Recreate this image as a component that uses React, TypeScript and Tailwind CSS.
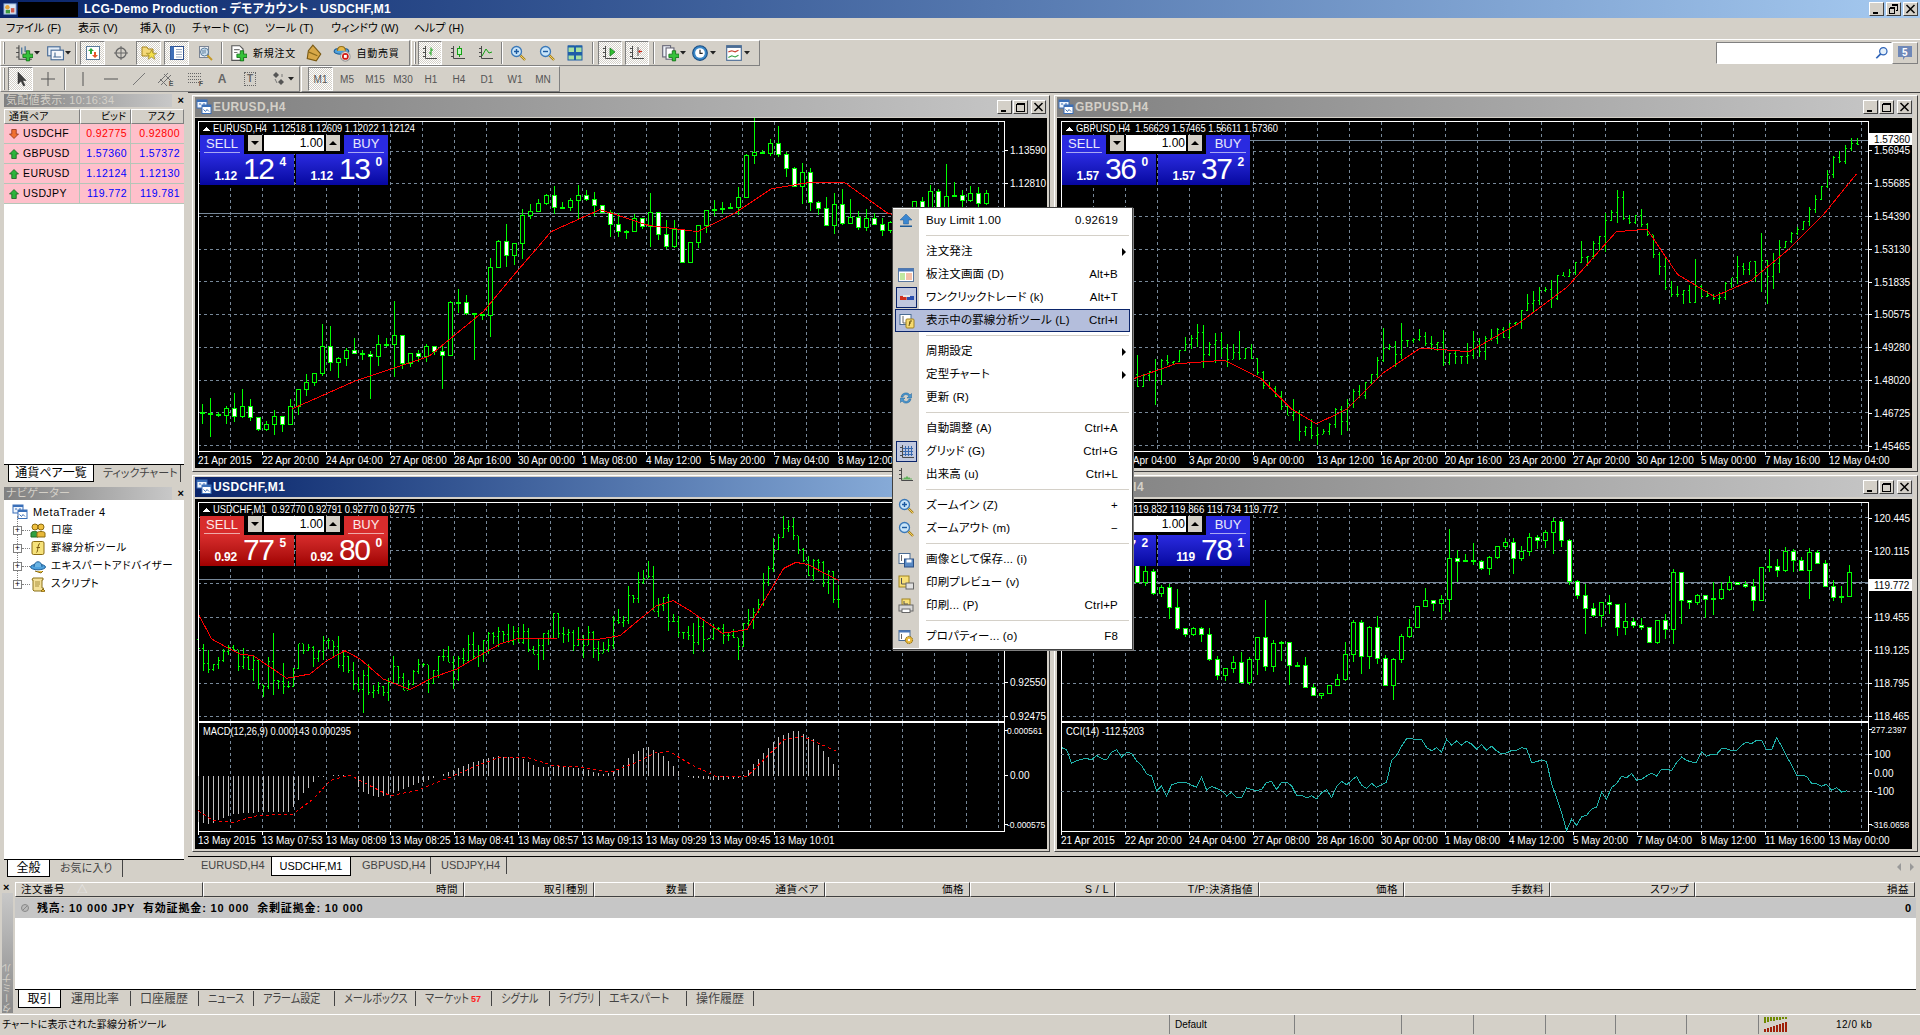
import React from 'react';

type Pt = [number, number];

// ─── helpers: trace coordinates come from the 1568 wide preview, or the 3x crop of the USDCHF window ───
const sp = (p: Pt[]): Pt[] => p.map(([x, y]) => [x * 1.2245, y * 1.2245]);
const z9 = (p: Pt[]): Pt[] => p.map(([x, y]) => [190 + x / 3, 470 + y / 3]);

const interp = (pts: Pt[], x: number) => {
  if (x <= pts[0][0]) return pts[0][1];
  for (let i = 1; i < pts.length; i++) {
    if (x <= pts[i][0]) {
      const t = (x - pts[i - 1][0]) / (pts[i][0] - pts[i - 1][0]);
      return pts[i - 1][1] + t * (pts[i][1] - pts[i - 1][1]);
    }
  }
  return pts[pts.length - 1][1];
};

const rng = (seed: number) => () => {
  seed = (seed + 0x6d2b79f5) | 0;
  let t = Math.imul(seed ^ (seed >>> 15), 1 | seed);
  t = (t + Math.imul(t ^ (t >>> 7), 61 | t)) ^ t;
  return ((t ^ (t >>> 14)) >>> 0) / 4294967296;
};

type Bar = { x: number; o: number; c: number; h: number; l: number };

const makeBars = (pts: Pt[], x0: number, x1: number, step: number, noise: number, wick: number, seed: number) => {
  const r = rng(seed);
  const out: Bar[] = [];
  let prev = interp(pts, x0);
  for (let x = x0; x <= x1; x += step) {
    const spike = r() < 0.16 ? 2.3 : 1;
    const c = interp(pts, x) + (r() - 0.5) * 2 * noise * spike;
    const o = prev;
    const up = r() * r() * wick * spike;
    const dn = r() * r() * wick * spike;
    out.push({ x: Math.round(x), o, c, h: Math.min(o, c) - up, l: Math.max(o, c) + dn });
    prev = c;
  }
  return out;
};

const toLine = (p: Pt[]) => p.map(([x, y]) => `${x.toFixed(1)},${y.toFixed(1)}`).join(' ');

const jitter = (pts: Pt[], step: number, amp: number, seed: number): Pt[] => {
  const r = rng(seed);
  const out: Pt[] = [];
  for (let x = pts[0][0]; x <= pts[pts.length - 1][0]; x += step) out.push([x, interp(pts, x) + (r() - 0.5) * amp]);
  return out;
};

const eurPath = sp([[163, 338], [175, 338], [190, 335], [205, 345], [232, 350], [240, 320], [268, 295], [300, 290], [330, 290], [360, 285], [365, 255], [395, 252], [405, 200], [440, 170], [470, 160], [490, 180], [520, 185], [555, 205], [570, 185], [605, 155], [610, 125], [640, 125], [650, 155], [680, 175], [725, 185], [760, 165], [805, 165]]);
const eurMa = sp([[238, 335], [290, 312], [350, 292], [395, 255], [420, 225], [450, 190], [490, 172], [530, 185], [570, 190], [600, 175], [630, 155], [660, 150], [690, 150], [725, 175], [800, 190]]);
const gbpPath = sp([[868, 300], [926, 310], [945, 300], [975, 280], [1000, 290], [1015, 285], [1030, 310], [1050, 340], [1072, 358], [1090, 340], [1110, 320], [1130, 290], [1160, 275], [1190, 295], [1230, 270], [1260, 240], [1290, 215], [1320, 172], [1340, 185], [1360, 235], [1385, 245], [1400, 240], [1420, 215], [1440, 225], [1465, 190], [1490, 150], [1500, 125], [1520, 120]]);
const gbpMa = sp([[868, 305], [926, 310], [960, 298], [1000, 295], [1030, 310], [1055, 335], [1075, 347], [1100, 335], [1130, 305], [1160, 285], [1200, 288], [1240, 265], [1280, 235], [1320, 190], [1345, 188], [1370, 225], [1400, 243], [1430, 230], [1460, 205], [1490, 175], [1516, 143]]);
const chfPath = [
  ...z9([[25, 510], [50, 590], [80, 560], [110, 555], [150, 570], [190, 575], [210, 680], [240, 630], [280, 680], [300, 620], [320, 520], [360, 550], [400, 510], [430, 550], [470, 580], [510, 680], [540, 700], [570, 670], [590, 625], [650, 660], [680, 610], [720, 620], [740, 580], [790, 580], [830, 540], [880, 530], [900, 490], [950, 505], [1000, 500], [1030, 550], [1070, 500], [1130, 485], [1165, 540], [1190, 495], [1230, 540], [1260, 495], [1300, 440], [1320, 375], [1370, 330], [1395, 420], [1420, 440], [1450, 450], [1470, 510], [1500, 505]]),
  ...sp([[580, 518], [605, 518], [620, 490], [630, 460], [640, 425], [650, 440], [660, 465], [675, 470], [685, 475]]),
];
const chfMa = [
  ...z9([[25, 435], [65, 510], [110, 535], [150, 555], [190, 560], [290, 628], [360, 615], [410, 575], [465, 545], [510, 570], [580, 630], [660, 662], [730, 625], [800, 600], [860, 565], [930, 525], [985, 508], [1100, 510], [1160, 510], [1230, 510], [1290, 500], [1350, 450], [1400, 410], [1450, 395], [1500, 425]]),
  ...sp([[590, 518], [610, 515], [625, 490], [640, 465], [650, 460], [660, 462], [685, 475]]),
];
const macdHist = [
  ...z9([[25, 1060], [60, 1065], [130, 1035], [200, 1030], [300, 1030], [330, 985], [360, 950], [385, 925], [440, 918], [490, 920], [510, 965], [560, 985], [600, 975], [680, 945], [720, 930], [760, 915], [800, 900], [850, 880], [920, 860], [1000, 870], [1040, 895], [1080, 895], [1120, 890], [1200, 905], [1240, 915], [1290, 900], [1320, 860], [1370, 830], [1420, 860], [1460, 900], [1480, 920], [1500, 925]]),
  ...sp([[585, 638], [605, 636], [620, 620], [635, 603], [650, 597], [665, 605], [685, 630]]),
];
const macdSig = [
  ...z9([[25, 1025], [70, 1055], [130, 1060], [200, 1040], [310, 1035], [370, 990], [420, 935], [480, 918], [540, 950], [600, 980], [680, 965], [780, 925], [860, 890], [930, 865], [1010, 865], [1090, 890], [1180, 895], [1260, 910], [1340, 880], [1400, 850], [1440, 848], [1500, 885]]),
  ...sp([[585, 635], [610, 635], [640, 605], [655, 602], [685, 615]]),
];
const jpyPath = sp([[868, 470], [926, 470], [950, 495], [975, 520], [990, 550], [1010, 555], [1030, 520], [1060, 555], [1085, 560], [1105, 520], [1135, 560], [1150, 510], [1180, 480], [1200, 460], [1230, 450], [1265, 430], [1285, 480], [1310, 500], [1330, 510], [1350, 525], [1375, 480], [1410, 490], [1440, 475], [1470, 455], [1500, 480], [1510, 480]]);
const cciPath = sp([[867, 617], [890, 622], [920, 615], [950, 647], [980, 640], [1020, 650], [1050, 640], [1075, 655], [1100, 640], [1130, 640], [1150, 597], [1175, 612], [1200, 605], [1230, 615], [1260, 620], [1280, 675], [1300, 660], [1320, 640], [1350, 630], [1380, 620], [1430, 612], [1450, 607], [1470, 635], [1490, 640], [1510, 650]]);

type ChartCfg = {
  ox: number; oy: number; w: number; h: number; fr: number; mb: number;
  gridY: number; gridStep: number; head: string;
  labels: [string, number][]; dates: string[];
  priceLine: number; priceBox?: [string, number];
  bars: Bar[]; candle: boolean; ma?: Pt[];
  indTop?: number; indText?: string; indLen?: number; indLabels?: [string, number][];
  hist?: { base: number; pts: Pt[]; sig: Pt[] }; cci?: Pt[]; levels?: number[];
};

const ChartSvg: React.FC<{ c: ChartCfg }> = ({ c }) => {
  const fl = c.ox + (c.ox < 1000 ? 3 : 4);
  const axisBottom = c.indTop ? 832 : c.mb;
  const xs: number[] = [];
  for (let x = fl + 32; x < c.fr; x += 32) xs.push(x);
  const ys: number[] = [];
  for (let y = c.gridY; y < c.mb - 1; y += c.gridStep) ys.push(Math.round(y));
  return (
    <svg width={c.w} height={c.h} viewBox={`${c.ox} ${c.oy} ${c.w} ${c.h}`} shapeRendering="crispEdges" className="block">
      {xs.map((x) => (
        <g key={x}>
          <line x1={x + 0.5} x2={x + 0.5} y1={c.oy + 4} y2={c.mb} stroke="#778899" strokeDasharray="3 3" />
          {c.indTop && <line x1={x + 0.5} x2={x + 0.5} y1={c.indTop + 1} y2={axisBottom} stroke="#778899" strokeDasharray="3 3" />}
        </g>
      ))}
      {ys.map((y) => (
        <line key={y} x1={fl} x2={c.fr} y1={y + 0.5} y2={y + 0.5} stroke="#778899" strokeDasharray="3 3" />
      ))}
      <line x1={fl} x2={c.fr} y1={c.priceLine + 0.5} y2={c.priceLine + 0.5} stroke="#778899" />
      {c.bars.map((b) =>
        c.candle ? (
          <g key={b.x}>
            <line x1={b.x + 0.5} x2={b.x + 0.5} y1={b.h} y2={b.l} stroke="#00ff00" />
            <rect x={b.x - 1.5} y={Math.min(b.o, b.c)} width={4} height={Math.max(1, Math.abs(b.o - b.c))} fill={b.c > b.o ? '#ffffff' : '#000000'} stroke="#00ff00" />
          </g>
        ) : (
          <g key={b.x} stroke="#00ff00">
            <line x1={b.x + 0.5} x2={b.x + 0.5} y1={b.h} y2={b.l} />
            <line x1={b.x - 1} x2={b.x} y1={b.o} y2={b.o} />
            <line x1={b.x + 1} x2={b.x + 2} y1={b.c} y2={b.c} />
          </g>
        ),
      )}
      {c.ma && <polyline points={toLine(c.ma)} fill="none" stroke="#ff0000" />}
      <rect x={fl + 0.5} y={c.oy + 3.5} width={c.fr - fl} height={c.mb - c.oy - 3.5} fill="none" stroke="#ffffff" />
      {c.indTop && <rect x={fl + 0.5} y={c.indTop + 0.5} width={c.fr - fl} height={axisBottom - c.indTop} fill="none" stroke="#ffffff" />}
      {c.hist && jitter(c.hist.pts, 5, 0, 1).map(([x, y]) => (
        <line key={x} x1={Math.round(x) + 0.5} x2={Math.round(x) + 0.5} y1={c.hist!.base} y2={y} stroke="#c0c0c0" />
      ))}
      {c.hist && <polyline points={toLine(c.hist.sig)} fill="none" stroke="#ff0000" strokeDasharray="3 3" />}
      {c.levels?.map((y) => <line key={y} x1={fl} x2={c.fr} y1={y + 0.5} y2={y + 0.5} stroke="#778899" strokeDasharray="3 3" />)}
      {c.cci && <polyline points={toLine(c.cci)} fill="none" stroke="#20b2aa" />}

      {c.dates.map((d, i) => (
        <g key={d}>
          <line x1={fl + 64 * i + 0.5} x2={fl + 64 * i + 0.5} y1={axisBottom} y2={axisBottom + 4} stroke="#ffffff" />
          <text x={fl + 64 * i} y={axisBottom + 13} fontSize={10} fill="#ffffff">{d}</text>
        </g>
      ))}
      {[...c.labels, ...(c.indLabels ?? [])].map(([t, y]) => (
        <g key={t}>
          <line x1={c.fr} x2={c.fr + 4} y1={y + 0.5} y2={y + 0.5} stroke="#ffffff" />
          <text x={t.length > 7 ? c.fr + 3 : c.fr + 6} y={y + 4} fontSize={t.length > 7 ? 8.5 : 10} fill="#ffffff">{t}</text>
        </g>
      ))}
      {c.priceBox && (
        <g>
          <rect x={c.fr + 1} y={c.priceBox[1] - 6} width={43} height={12} fill="#ffffff" />
          <text x={c.fr + 6} y={c.priceBox[1] + 4} fontSize={10} fill="#000000">{c.priceBox[0]}</text>
        </g>
      )}
      <polygon points={`${fl + 5},${c.oy + 13} ${fl + 12},${c.oy + 13} ${fl + 8.5},${c.oy + 9}`} fill="#ffffff" />
      <text x={fl + 15} y={c.oy + 14} fontSize={10.5} fill="#ffffff" xmlSpace="preserve" textLength={202} lengthAdjust="spacingAndGlyphs">{c.head}</text>
      {c.indText && <text x={fl + 5} y={c.indTop! + 13} fontSize={10.5} fill="#ffffff" textLength={c.indLen} lengthAdjust="spacingAndGlyphs">{c.indText}</text>}
    </svg>
  );
};

const eur: ChartCfg = {
  ox: 195, oy: 119, w: 852, h: 350, fr: 1004, mb: 452, gridY: 151.7, gridStep: 32.7,
  head: 'EURUSD,H4  1.12518 1.12609 1.12022 1.12124',
  labels: [['1.13590', 151], ['1.12810', 184]],
  dates: ['21 Apr 2015', '22 Apr 20:00', '24 Apr 04:00', '27 Apr 08:00', '28 Apr 16:00', '30 Apr 00:00', '1 May 08:00', '4 May 12:00', '5 May 20:00', '7 May 04:00', '8 May 12:00'],
  priceLine: 214, bars: makeBars(eurPath, 202, 986, 8, 10, 24, 11), candle: true, ma: eurMa,
};
const gbp: ChartCfg = {
  ox: 1057, oy: 119, w: 855, h: 350, fr: 1868, mb: 452, gridY: 151.7, gridStep: 32.7,
  head: 'GBPUSD,H4  1.56629 1.57465 1.56611 1.57360',
  labels: [['1.56945', 151], ['1.55685', 184], ['1.54390', 217], ['1.53130', 250], ['1.51835', 283], ['1.50575', 315], ['1.49280', 348], ['1.48020', 381], ['1.46725', 414], ['1.45465', 447]],
  dates: ['31 Mar 12:00', '1 Apr 04:00', '3 Apr 20:00', '9 Apr 00:00', '13 Apr 12:00', '16 Apr 20:00', '20 Apr 16:00', '23 Apr 20:00', '27 Apr 20:00', '30 Apr 12:00', '5 May 00:00', '7 May 16:00', '12 May 04:00'],
  priceLine: 141, priceBox: ['1.57360', 140], bars: makeBars(gbpPath, 1065, 1861, 6, 6, 14, 23), candle: false, ma: gbpMa,
};
const chf: ChartCfg = {
  ox: 195, oy: 500, w: 852, h: 350, fr: 1004, mb: 722, gridY: 517.7, gridStep: 33.3,
  head: 'USDCHF,M1  0.92770 0.92791 0.92770 0.92775',
  labels: [['0.92550', 683], ['0.92475', 717]],
  dates: ['13 May 2015', '13 May 07:53', '13 May 08:09', '13 May 08:25', '13 May 08:41', '13 May 08:57', '13 May 09:13', '13 May 09:29', '13 May 09:45', '13 May 10:01'],
  priceLine: 580, bars: makeBars(chfPath, 198, 839, 5, 10, 16, 37), candle: false, ma: chfMa,
  indTop: 723, indText: 'MACD(12,26,9) 0.000143 0.000295', indLen: 148,
  indLabels: [['0.000561', 731], ['0.00', 776], ['-0.000575', 825]],
  hist: { base: 777, pts: macdHist, sig: macdSig },
};
const jpy: ChartCfg = {
  ox: 1057, oy: 500, w: 855, h: 350, fr: 1868, mb: 722, gridY: 517.7, gridStep: 33.3,
  head: 'USDJPY,H4  119.832 119.866 119.734 119.772',
  labels: [['120.445', 519], ['120.115', 552], ['119.455', 618], ['119.125', 651], ['118.795', 684], ['118.465', 717]],
  dates: ['21 Apr 2015', '22 Apr 20:00', '24 Apr 04:00', '27 Apr 08:00', '28 Apr 16:00', '30 Apr 00:00', '1 May 08:00', '4 May 12:00', '5 May 20:00', '7 May 04:00', '8 May 12:00', '11 May 16:00', '13 May 00:00'],
  priceLine: 583, priceBox: ['119.772', 586], bars: makeBars(jpyPath, 1065, 1849, 8, 16, 22, 53), candle: true,
  indTop: 723, indText: 'CCI(14) -112.5203', indLen: 78,
  indLabels: [['277.2397', 730], ['100', 755], ['0.00', 774], ['-100', 792], ['-316.0658', 825]],
  cci: jitter(cciPath, 5, 14, 7), levels: [755, 792],
};

// ─── icons ────────────────────
const axes = <path d="M3.5 1v12.5H15M1 3.5h2M1 7.5h2M1 11.5h2" stroke="#4a4a4a" fill="none" />;
const plus = <path d="M10 6h3v3h3v3h-3v3h-3v-3H7V9h3z" fill="#35c23a" stroke="#0b6a12" strokeWidth="0.7" />;
const lens = (sign: React.ReactNode) => (
  <>
    <path d="M10 10l5 5" stroke="#a87f18" strokeWidth="2.4" />
    <path d="M10 10l5 5" stroke="#f0d060" strokeWidth="1" />
    <circle cx="6.5" cy="6.5" r="5" fill="#c8e4f8" stroke="#3a78b8" strokeWidth="1.3" />
    {sign}
  </>
);
const docBase = <path d="M2.5 1.5h7l3 3v10h-10z" fill="#fff" stroke="#555" />;

const glyphs: Record<string, React.ReactNode> = {
  app: <><rect x="1" y="2" width="14" height="12" fill="#dbe7f7" stroke="#6d8fc0" /><circle cx="5" cy="6" r="2.6" fill="#e3a33b" /><rect x="3" y="9" width="5" height="4" fill="#3d9b3d" /><rect x="9" y="7" width="4" height="5" fill="#cf5a4a" /></>,
  win: <><rect x="1" y="1" width="10" height="8" fill="#eef4fc" stroke="#3a6fb8" /><rect x="1" y="1" width="10" height="2" fill="#3a6fb8" /><rect x="6" y="6" width="9" height="8.5" fill="#fff" stroke="#3a6fb8" /><rect x="6" y="6" width="9" height="2" fill="#3a6fb8" /><path d="M7.5 10.5l2 2 1.5-2 2 2" stroke="#3a6fb8" fill="none" /><path d="M3 5h2M7 5h2" stroke="#3a6fb8" /></>,
  newChart: <>{axes}<path d="M6 3v6M9 2v5" stroke="#3a6a9a" />{plus}</>,
  profiles: <><rect x="1.5" y="2.5" width="11" height="8" fill="#e4ecf6" stroke="#466a96" /><rect x="4.5" y="5.5" width="11" height="8.5" fill="#f4f7fb" stroke="#466a96" /><path d="M6.5 11.5h7M8 7.5v4" stroke="#466a96" /></>,
  mw: <><rect x="1.5" y="1.5" width="13" height="13" fill="#fff" stroke="#5a7b9c" /><path d="M6 3l3 3H7v3H5V6H3z" fill="#2aa83a" /><path d="M10 13l-3-3h2V7h2v3h2z" fill="#e4552a" /></>,
  target: <><circle cx="8" cy="8" r="5" fill="none" stroke="#666" strokeWidth="1.3" /><path d="M8 1v14M1 8h14" stroke="#666" /></>,
  folderStar: <><path d="M1 2h5l1 2h5v7H1z" fill="#f4d878" stroke="#a58420" /><path d="M10.5 5l1.5 3.3h3.6l-2.8 2.2 1.1 3.7-3.4-2.2-3.4 2.2 1.1-3.7-2.8-2.2H9z" fill="#f4e04a" stroke="#8a7418" strokeWidth="0.6" /></>,
  term: <><rect x="1.5" y="1.5" width="13" height="13" fill="#fff" stroke="#2d4f8c" /><rect x="1.5" y="1.5" width="3.5" height="13" fill="#3e6fb8" /><path d="M7 4.5h6M7 7h6M7 9.5h6M7 12h6" stroke="#98a8c0" /></>,
  tester: <><rect x="2.5" y="1.5" width="9" height="11" fill="#eef0f4" stroke="#7a8494" /><path d="M10 10l5 5" stroke="#c69a28" strokeWidth="2" /><circle cx="7.5" cy="7" r="4" fill="#cfe0ee" stroke="#587c9c" /><path d="M6 5v4M8 4.5v4" stroke="#587c9c" /></>,
  newOrder: <>{docBase}<path d="M4.5 5h5M4.5 7.5h3" stroke="#777" />{plus}</>,
  gold: <><path d="M7 1l7 8-4 6-8-2 1-7z" fill="#d8a848" stroke="#7a5a14" /><path d="M3 7l8 3.5" stroke="#8a6a1c" /></>,
  auto: <><ellipse cx="7.5" cy="6.5" rx="6.5" ry="2.6" fill="#4ea2de" stroke="#1f5f98" /><path d="M4 6c0-5 7-5 7 0" fill="#e6b848" stroke="#94701a" /><circle cx="11" cy="11" r="4.2" fill="#fff" stroke="#999" /><circle cx="11" cy="11" r="3" fill="#d01c14" /><rect x="9.7" y="9.7" width="2.6" height="2.6" fill="#fff" /></>,
  bars: <>{axes}<path d="M9 2.5v8M7 8h2M9 5h2" stroke="#14a014" /></>,
  candle: <>{axes}<path d="M9.5 1v11" stroke="#14a014" /><rect x="7.5" y="3.5" width="4" height="6" fill="#bff2bf" stroke="#14a014" /></>,
  line: <>{axes}<path d="M4 11l4-7 3 4 3-1" stroke="#14a014" fill="none" /></>,
  zoomIn: lens(<path d="M4 6.5h5M6.5 4v5" stroke="#1c5aa0" strokeWidth="1.4" />),
  zoomOut: lens(<path d="M4 6.5h5" stroke="#1c5aa0" strokeWidth="1.4" />),
  tile: <><rect x="1" y="1" width="6.5" height="6.5" fill="#a8e0a0" stroke="#1f5fa8" /><rect x="8.5" y="1" width="6.5" height="6.5" fill="#a8e0a0" stroke="#1f5fa8" /><rect x="1" y="8.5" width="6.5" height="6.5" fill="#a8e0a0" stroke="#1f5fa8" /><rect x="8.5" y="8.5" width="6.5" height="6.5" fill="#a8e0a0" stroke="#1f5fa8" /><path d="M1 1.5h6.5M8.5 1.5H15M1 9.5h6.5M8.5 9.5H15" stroke="#1f5fa8" strokeWidth="2" /></>,
  scrollOn: <>{axes}<path d="M8 3l5 4-5 4z" fill="#30c030" stroke="#0e6e18" strokeWidth="0.7" /></>,
  shiftOn: <>{axes}<path d="M9 2v9" stroke="#555" /><path d="M13 6.5H10M11.5 5l-2 1.5 2 1.5" stroke="#d02818" fill="none" /></>,
  indAdd: <><rect x="1.5" y="1.5" width="7" height="10" fill="#eef2f8" stroke="#667" /><rect x="4.5" y="3.5" width="7" height="10" fill="#fff" stroke="#667" />{plus}</>,
  clock: <><circle cx="8" cy="8" r="6.5" fill="#3a88c8" stroke="#1c4f84" /><circle cx="8" cy="8" r="4.3" fill="#fff" /><path d="M8 5v3.3h2.4" stroke="#222" fill="none" /></>,
  template: <><rect x="1.5" y="1.5" width="13" height="13" fill="#fff" stroke="#4a6c94" /><rect x="1.5" y="1.5" width="13" height="2" fill="#4a6c94" /><path d="M3 7l3-1 3 1 3-1.5" stroke="#c84030" fill="none" /><path d="M3 12l3-1.5 3 1 3-1.5" stroke="#30a040" fill="none" /></>,
  arrow: <path d="M5 1v12l3-3 2.5 5 1.5-.8L9.5 9.5H13z" fill="#3c3c3c" stroke="#222" strokeWidth="0.5" />,
  cross: <path d="M8 1v14M1 8h14" stroke="#555" />,
  vline: <path d="M8 1v14" stroke="#555" />,
  hline: <path d="M1 8h14" stroke="#555" />,
  trend: <path d="M2 14L14 2" stroke="#777" />,
  chan: <><path d="M1 12L11 2M4 14L14 4M3 8l7 7M7 3l7 7" stroke="#707070" /></>,
  fibo: <path d="M1 2.5h14M1 5.5h14M1 8.5h14M1 11.5h14" stroke="#666" strokeDasharray="1 1" />,
  shapes: <><path d="M5 1l3 3-3 3-3-3z" fill="#555" /><path d="M10 8l3 3-3 3-3-3z" fill="#555" /><path d="M4 8l2 4M11 3v3" stroke="#777" /></>,
  upBlue: <><path d="M8 1l6 6h-3.5v4h-5V7H2z" fill="#3a86d0" stroke="#1c5a98" strokeWidth="0.5" /><rect x="2" y="12.5" width="12" height="1.5" fill="#1c5a98" /></>,
  table: <><rect x="0.5" y="1.5" width="15" height="13" fill="#fff" stroke="#5a78a0" /><rect x="0.5" y="1.5" width="15" height="3" fill="#4a78b8" /><rect x="2" y="6" width="5" height="7" fill="#c0e8a0" /><rect x="8" y="6" width="6" height="7" fill="#f4c0a8" /></>,
  oneClick: <><rect x="1" y="6" width="6.5" height="4" fill="#d03020" /><rect x="8" y="6" width="7" height="4" fill="#2a4fb0" /><rect x="4" y="5" width="7" height="2" fill="#e8e8e8" /></>,
  fDoc: <><rect x="1" y="1.5" width="11" height="10" fill="#fff" stroke="#4a6c94" /><path d="M4 3v7h7" stroke="#666" fill="none" /><rect x="7" y="6" width="8" height="9" rx="1" fill="#f6da70" stroke="#a08020" /><path d="M10 13l1-5h2M10 10h2" stroke="#6a5210" fill="none" /></>,
  refresh: <><path d="M3 7a5 5 0 0 1 9-2l1.5-1.5V8H9l1.7-1.7A3 3 0 0 0 5 7z" fill="#4a98d0" stroke="#1f6098" strokeWidth="0.5" /><path d="M13 9a5 5 0 0 1-9 2l-1.5 1.5V8H7L5.3 9.7A3 3 0 0 0 11 9z" fill="#4a98d0" stroke="#1f6098" strokeWidth="0.5" /></>,
  grid: <>{axes}<path d="M6.5 2v10M9.5 2v10M12.5 2v10M4 4.5h10M4 7.5h10M4 10.5h10" stroke="#3a6ab0" /></>,
  volume: <>{axes}<path d="M5 12.5v-1M7 12.5v-2M9 12.5v-3M11 12.5v-2M13 12.5v-1" stroke="#14a014" strokeWidth="1.2" /></>,
  save: <><rect x="1" y="1.5" width="11" height="10" fill="#fff" stroke="#4a6c94" /><path d="M3.5 3v6" stroke="#666" /><rect x="6.5" y="7" width="9" height="8" fill="#5a8ac4" stroke="#2a4f84" /><rect x="8.5" y="7.5" width="5" height="3" fill="#fff" /></>,
  preview: <><rect x="1" y="1" width="10" height="11" fill="#f8e078" stroke="#a08420" /><path d="M3.5 3v6h6" stroke="#555" fill="none" /><rect x="8" y="8" width="7.5" height="6" fill="#e0e0e0" stroke="#666" /></>,
  print: <><rect x="4" y="1" width="8" height="6" fill="#f8e078" stroke="#a08420" /><path d="M6 3v3h4" stroke="#555" fill="none" /><rect x="1" y="7" width="14" height="6" fill="#d8d8d8" stroke="#666" /><rect x="4" y="11" width="8" height="3.5" fill="#fff" stroke="#666" /></>,
  props: <><rect x="1" y="1.5" width="11" height="10" fill="#fff" stroke="#4a6c94" /><rect x="1" y="1.5" width="11" height="2" fill="#4a78b8" /><path d="M3.5 5v5" stroke="#666" /><circle cx="11" cy="11" r="3.6" fill="#e8b838" stroke="#8a6a10" strokeDasharray="1.6 0.6" /><circle cx="11" cy="11" r="1.2" fill="#fff" /></>,
  account: <><circle cx="5" cy="5" r="3" fill="#f0c040" stroke="#8a6a10" /><circle cx="11" cy="5" r="3" fill="#f0c040" stroke="#8a6a10" /><path d="M1 15v-4c0-2 7-2 7 0v4z" fill="#30a040" stroke="#1a6a20" /><path d="M7 15v-4c0-2 8-2 8 0v4z" fill="#e8b838" stroke="#8a6a10" /></>,
  fBook: <><rect x="2" y="1.5" width="12" height="13" rx="1.5" fill="#f6e27a" stroke="#8a6a10" /><path d="M6.5 12.5c1.5 0 1-9 3.5-9M6.5 7.5h3.5" stroke="#7a5a10" fill="none" /></>,
  hat: <><ellipse cx="8" cy="9" rx="7.5" ry="2.8" fill="#4ea2de" stroke="#1f5f98" /><path d="M4 9c0-7 8-7 8 0" fill="#6ab4e4" stroke="#1f5f98" /><path d="M5 13l6 2 2-2" fill="#e8c040" stroke="#8a6a10" /></>,
  script: <><path d="M3 2h10v2h-1v8h1.5l-1 3H4l-1-1V4H2z" fill="#f4e098" stroke="#8a7018" /><path d="M5 6h5M5 8h5M5 10h4" stroke="#a89040" /><path d="M13 13l2 2-2 1-2-1z" fill="#e8b838" stroke="#8a6a10" /></>,
  search: <><circle cx="9.5" cy="6" r="4.2" fill="#e4f0fa" stroke="#2f64b8" strokeWidth="1.4" /><path d="M6.5 9l-5 5" stroke="#2f64b8" strokeWidth="2" /></>,
  msg: <><path d="M1 1h14v11H8l-2 3v-3H1z" fill="#6f88b8" /></>,
  mwUp: <path d="M8 2l6 6h-3v6H5V8H2z" fill="#2cb33a" stroke="#0d5d18" />,
  mwDown: <path d="M8 14L2 8h3V2h6v6h3z" fill="#f07030" stroke="#8a2c10" />,
};

const Ico: React.FC<{ n: string; s?: number }> = ({ n, s = 16 }) => (
  <svg width={s} height={s} viewBox="0 0 16 16" className="block shrink-0" shapeRendering="geometricPrecision">
    {glyphs[n]}
  </svg>
);

const Caret = () => (
  <svg width="6" height="4" viewBox="0 0 6 4" className="ml-[1px] block shrink-0">
    <path d="M0 0h6L3 3.5z" fill="#222" />
  </svg>
);

const pressed = 'bg-[repeating-conic-gradient(#d4d0c8_0_25%,#fff_0_50%)] bg-[length:2px_2px] border border-t-[#808080] border-l-[#808080] border-r-white border-b-white';

const TB: React.FC<{ className?: string; on?: boolean; children: React.ReactNode }> = ({ className = 'w-[25px]', on, children }) => (
  <div className={`flex h-[24px] shrink-0 items-center justify-center ${on ? pressed : ''} ${className}`}>{children}</div>
);

const Sep: React.FC<{ className: string }> = ({ className }) => (
  <div className={`flex h-[22px] shrink-0 justify-center ${className}`}>
    <div className="h-full w-[2px] border-l border-l-[#808080] border-r border-r-white" />
  </div>
);

const Grip = () => <div className="ml-[2px] h-[22px] w-[2px] shrink-0 border-l border-l-white border-r border-r-[#808080]" />;

const barSeg = 'flex h-[26px] shrink-0 items-center border border-t-white border-l-white border-r-[#808080] border-b-[#808080]';

const Toolbar1 = () => (
  <div className="flex h-[26px] items-center">
    <div className={`${barSeg} w-[410px]`}>
      <Grip />
      <div className="w-[5px] shrink-0" />
      <TB className="w-[34px]"><Ico n="newChart" s={18} /><Caret /></TB>
      <TB className="w-[28px]"><Ico n="profiles" s={18} /><Caret /></TB>
      <Sep className="w-[8px]" />
      <TB on><Ico n="mw" /></TB>
      <TB className="ml-[3px] w-[25px]"><Ico n="target" /></TB>
      <TB on className="ml-[3px] w-[25px]"><Ico n="folderStar" /></TB>
      <TB on className="ml-[3px] w-[25px]"><Ico n="term" /></TB>
      <TB className="ml-[3px] w-[25px]"><Ico n="tester" /></TB>
      <Sep className="w-[10px]" />
      <TB className="w-[71px]"><Ico n="newOrder" s={18} /><span className="ml-[6px] whitespace-nowrap text-[10px] tracking-[0.7px]">新規注文</span></TB>
      <TB className="ml-[4px] w-[24px]"><Ico n="gold" s={18} /></TB>
      <TB className="ml-[4px] w-[72px]"><Ico n="auto" s={18} /><span className="ml-[6px] whitespace-nowrap text-[10px] tracking-[0.7px]">自動売買</span></TB>
    </div>
    <div className={`${barSeg} ml-[1px] w-[349px]`}>
      <Grip />
      <div className="w-[2px] shrink-0" />
      <TB on className="w-[24px]"><Ico n="bars" /></TB>
      <TB className="ml-[4px] w-[24px]"><Ico n="candle" /></TB>
      <TB className="ml-[4px] w-[24px]"><Ico n="line" /></TB>
      <Sep className="w-[8px]" />
      <TB className="w-[24px]"><Ico n="zoomIn" /></TB>
      <TB className="ml-[5px] w-[24px]"><Ico n="zoomOut" /></TB>
      <TB className="ml-[4px] w-[24px]"><Ico n="tile" /></TB>
      <Sep className="w-[11px]" />
      <TB on className="w-[24px]"><Ico n="scrollOn" /></TB>
      <TB on className="ml-[3px] w-[24px]"><Ico n="shiftOn" /></TB>
      <Sep className="w-[10px]" />
      <TB className="w-[28px]"><Ico n="indAdd" s={18} /><Caret /></TB>
      <TB className="ml-[2px] w-[28px]"><Ico n="clock" s={18} /><Caret /></TB>
      <TB className="ml-[5px] w-[30px]"><Ico n="template" s={18} /><Caret /></TB>
    </div>
    <div className="ml-auto flex h-[22px] items-center pr-[2px]">
      <div className="flex h-full w-[176px] items-center justify-end border border-t-[#808080] border-l-[#808080] border-r-white border-b-white bg-white pr-[2px]">
        <Ico n="search" s={14} />
      </div>
      <div className="relative flex h-full w-[26px] items-center justify-center border border-t-white border-l-white border-r-[#808080] border-b-[#808080]">
        <Ico n="msg" s={16} />
        <span className="absolute left-[9px] top-[2px] text-[10px] font-bold text-white">5</span>
      </div>
    </div>
  </div>
);

const Toolbar2 = () => (
  <div className="flex h-[26px] items-center">
    <div className={`${barSeg} w-[300px]`}>
      <Grip />
      <div className="w-[3px] shrink-0" />
      <TB on><Ico n="arrow" /></TB>
      <TB className="ml-[3px] w-[24px]"><Ico n="cross" /></TB>
      <Sep className="w-[10px]" />
      <TB className="ml-[1px] w-[24px]"><Ico n="vline" /></TB>
      <TB className="ml-[4px] w-[24px]"><Ico n="hline" /></TB>
      <TB className="ml-[4px] w-[24px]"><Ico n="trend" /></TB>
      <TB className="ml-[2px] w-[24px]"><Ico n="chan" /><span className="-ml-[4px] mt-[10px] text-[7px] font-bold text-[#555]">E</span></TB>
      <TB className="ml-[6px] w-[24px]"><Ico n="fibo" /><span className="-ml-[4px] mt-[10px] text-[7px] font-bold text-[#555]">F</span></TB>
      <TB className="ml-[3px] w-[24px]"><span className="text-[12px] font-bold text-[#666]">A</span></TB>
      <TB className="ml-[4px] w-[24px]"><span className="border border-dotted border-[#666] px-[2px] text-[10px] font-bold leading-[12px] text-[#666]">T</span></TB>
      <TB className="ml-[6px] w-[28px]"><Ico n="shapes" /><Caret /></TB>
    </div>
    <div className={`${barSeg} ml-[1px] w-[259px] text-[10px] text-[#555]`}>
      <div className="w-[6px] shrink-0" />
      <TB on>M1</TB>
      <TB className="w-[28px]">M5</TB>
      <TB className="w-[28px]">M15</TB>
      <TB className="w-[28px]">M30</TB>
      <TB className="w-[28px]">H1</TB>
      <TB className="w-[28px]">H4</TB>
      <TB className="w-[28px]">D1</TB>
      <TB className="w-[28px]">W1</TB>
      <TB className="w-[28px]">MN</TB>
    </div>
  </div>
);

const WinBtn: React.FC<{ kind: 'min' | 'max' | 'res' | 'x' }> = ({ kind }) => (
  <div className="flex h-[14px] w-[15px] items-center justify-center border border-t-white border-l-white border-r-[#404040] border-b-[#404040] bg-[#d4d0c8]">
    <svg width="11" height="10" viewBox="0 0 11 10" shapeRendering="crispEdges" className="block">
      {kind === 'min' && <path d="M2 8h5v2H2z" fill="#000" />}
      {kind === 'max' && <path d="M1.5 2.5h8v7h-8zM1.5 1.5h8" fill="none" stroke="#000" />}
      {kind === 'res' && <path d="M3.5 1.5h6v5h-2M3.5 .5h6M1.5 4.5h5v5h-5zM1.5 3.5h5" fill="none" stroke="#000" />}
      {kind === 'x' && <path d="M1.5 1l8 8M9.5 1l-8 8" stroke="#000" strokeWidth="1.5" shapeRendering="auto" />}
    </svg>
  </div>
);

const BigDigits: React.FC<{ small: string; big: string; sup: string }> = ({ small, big, sup }) => (
  <div className="flex h-full w-full items-end text-white">
    <span className="mb-[1px] w-[37px] text-right text-[12px] font-bold leading-[15px] tracking-[-0.2px]">{small}</span>
    <span className="mb-[1px] ml-[6px] text-[30px] font-normal leading-[30px] tracking-[-1.5px]">{big}</span>
    <span className="mb-[15px] ml-[6px] text-[12px] font-bold leading-[15px]">{sup}</span>
  </div>
);

const TradePanel: React.FC<{ small: string; a: string; as: string; b: string; bs: string; red?: boolean }> = ({ small, a, as, b, bs, red }) => {
  const head = red ? 'bg-[#d82c2c]' : 'bg-[#2a2ae0]';
  const body = red ? 'bg-linear-to-b from-[#d82c2c] to-[#a00000]' : 'bg-linear-to-b from-[#2a2ae0] to-[#0606a0]';
  return (
    <div className="absolute left-[5px] top-[17px] w-[188px] text-[#ffffff]">
      <div className="flex h-[19px] items-stretch bg-black">
        <div className={`flex w-[44px] justify-center ${head}`}>
          <span className="mt-[2px] h-[16px] w-[36px] border-b border-b-white/60 text-center text-[13px] leading-[14px] text-white/90">SELL</span>
        </div>
        <div className="ml-[4px] flex h-[16px] w-[92px] items-stretch">
          <div className="flex w-[14px] items-center justify-center bg-[#d4d0c8]"><div className="h-0 w-0 border-x-[4px] border-t-[4px] border-x-transparent border-t-black" /></div>
          <div className="ml-[2px] w-[60px] bg-white pr-[1px] text-right text-[12px] leading-[16px] text-black">1.00</div>
          <div className="ml-[2px] flex w-[14px] items-center justify-center bg-[#d4d0c8]"><div className="h-0 w-0 border-x-[4px] border-b-[4px] border-x-transparent border-b-black" /></div>
        </div>
        <div className={`ml-auto flex w-[44px] justify-center ${head}`}>
          <span className="mt-[2px] h-[16px] w-[36px] border-b border-b-white/60 text-center text-[13px] leading-[14px] text-white/90">BUY</span>
        </div>
      </div>
      <div className="flex h-[31px] justify-between">
        <div className={`w-[94px] ${body}`}><BigDigits small={small} big={a} sup={as} /></div>
        <div className={`w-[92px] ${body}`}><BigDigits small={small} big={b} sup={bs} /></div>
      </div>
    </div>
  );
};

const ChartWindow: React.FC<{
  title: string; c: ChartCfg; active?: boolean; gap: string; wide?: boolean;
  panel: React.ReactNode;
}> = ({ title, c, active, gap, wide, panel }) => (
  <div className={`flex flex-col border border-t-white border-l-white border-r-[#404040] border-b-[#404040] pl-[2px] pt-[1px] ${wide ? 'w-[864px]' : 'w-[858px]'}`}>
    <div className={`flex h-[20px] shrink-0 items-center bg-linear-to-r pl-[1px] pr-[1px] ${wide ? 'mr-[4px]' : 'mr-[2px]'} ${active ? 'from-[#0a246a] to-[#a6caf0] text-white' : 'from-[#808080] to-[#c8c8c8] text-[#d4d0c8]'}`}>
      <Ico n="win" />
      <span className="ml-[1px] text-[12px] font-bold tracking-[0.4px]">{title}</span>
      <div className="ml-auto flex gap-[1px]">
        <WinBtn kind="min" />
        <WinBtn kind="max" />
        <div className="ml-[2px]"><WinBtn kind="x" /></div>
      </div>
    </div>
    <div className={`relative h-[350px] shrink-0 bg-black ${gap} ${wide ? 'w-[855px]' : 'w-[852px]'}`}>
      <ChartSvg c={c} />
      {panel}
    </div>
  </div>
);

const BevelTab: React.FC<{ label: string; className: string }> = ({ label, className }) => (
  <div className={`flex h-[17px] shrink-0 items-center whitespace-nowrap text-[#444] ${className}`}>{label}</div>
);

const PanelCaption: React.FC<{ text: string }> = ({ text }) => (
  <div className="flex h-[13px] shrink-0 items-center">
    <div className="flex h-full w-[168px] items-center bg-linear-to-r from-[#808080] to-[#c8c8c8] pl-[2px] text-[11px] tracking-[0.3px] text-[#d4d0c8]">{text}</div>
    <span className="ml-[6px] text-[11px] font-bold leading-none text-black">×</span>
  </div>
);

const quotes = [
  { s: 'USDCHF', b: '0.92775', a: '0.92800', down: true },
  { s: 'GBPUSD', b: '1.57360', a: '1.57372' },
  { s: 'EURUSD', b: '1.12124', a: '1.12130' },
  { s: 'USDJPY', b: '119.772', a: '119.781' },
];

const MarketWatch = () => (
  <div className="flex h-[388px] flex-col">
    <PanelCaption text="気配値表示: 10:16:34" />
    <div className="mt-[2px] flex h-[15px] text-[10px]">
      <div className="w-[76px] border-r border-r-[#808080] border-b border-b-[#808080] border-t border-t-white border-l border-l-white pl-[4px] leading-[13px]">通貨ペア</div>
      <div className="w-[51px] border-r border-r-[#808080] border-b border-b-[#808080] border-t border-t-white border-l border-l-white pr-[4px] text-right leading-[13px]">ビッド</div>
      <div className="w-[53px] border-r border-r-[#808080] border-b border-b-[#808080] border-t border-t-white border-l border-l-white pr-[8px] text-right leading-[13px]">アスク</div>
    </div>
    <div className="flex flex-1 flex-col bg-white">
      {quotes.map((q) => (
        <div key={q.s} className="flex h-[20px] border-b border-b-[#b5c6b8] bg-[#ffc0cb] text-[10.5px] tracking-[0.4px]">
          <div className="flex w-[76px] items-center border-r border-r-[#b5c6b8] pl-[4px]">
            <Ico n={q.down ? 'mwDown' : 'mwUp'} s={12} />
            <span className="ml-[3px]">{q.s}</span>
          </div>
          <div className={`flex w-[51px] items-center justify-end border-r border-r-[#b5c6b8] pr-[3px] ${q.down ? 'text-[#ff0000]' : 'text-[#0000ff]'}`}>{q.b}</div>
          <div className={`flex w-[53px] items-center justify-end pr-[4px] ${q.down ? 'text-[#ff0000]' : 'text-[#0000ff]'}`}>{q.a}</div>
        </div>
      ))}
    </div>
    <div className="flex h-[18px] shrink-0 border-t border-t-black text-[11px]">
      <div className="ml-[4px] flex w-[86px] items-center justify-center border-x border-b border-black bg-white text-[12px]">通貨ペア一覧</div>
      <div className="ml-[9px] flex w-[78px] items-center whitespace-nowrap border-r border-r-[#444] text-[#444]">ティックチャート</div>
    </div>
  </div>
);

const navItems = [
  { n: 'account', t: '口座' },
  { n: 'fBook', t: '罫線分析ツール' },
  { n: 'hat', t: 'エキスパートアドバイザー' },
  { n: 'script', t: 'スクリプト' },
];

const Navigator = () => (
  <div className="mt-[5px] flex h-[390px] flex-col">
    <PanelCaption text="ナビゲーター" />
    <div className="relative flex-1 bg-white pt-[3px] text-[11px]">
      <div className="absolute left-[13px] top-[16px] h-[68px] border-l border-dotted border-l-[#808080]" />
      <div className="flex h-[18px] items-center pl-[8px]">
        <Ico n="win" />
        <span className="ml-[5px] tracking-[0.6px]">MetaTrader 4</span>
      </div>
      {navItems.map((it) => (
        <div key={it.t} className="relative flex h-[18px] items-center pl-[9px]">
          <div className="flex h-[9px] w-[9px] items-center justify-center border border-[#808080] bg-white text-[9px] leading-none">+</div>
          <div className="w-[8px] border-t border-dotted border-t-[#808080]" />
          <Ico n={it.n} />
          <span className="ml-[5px] whitespace-nowrap text-[10.5px] tracking-[0.6px]">{it.t}</span>
        </div>
      ))}
    </div>
    <div className="flex h-[18px] shrink-0 border-t border-t-black text-[12px]">
      <div className="ml-[3px] flex w-[43px] items-center justify-center border-x border-b border-black bg-white">全般</div>
      <div className="ml-[10px] flex w-[63px] items-center whitespace-nowrap border-r border-r-[#444] text-[11px] text-[#444]">お気に入り</div>
    </div>
  </div>
);

const colHeads: [string, string][] = [
  ['時間', 'w-[261px]'], ['取引種別', 'w-[130px]'], ['数量', 'w-[100px]'], ['通貨ペア', 'w-[131px]'], ['価格', 'w-[145px]'],
  ['S / L', 'w-[145px]'], ['T/P:決済指値', 'w-[144px]'], ['価格', 'w-[145px]'], ['手数料', 'w-[146px]'], ['スワップ', 'w-[145px]'], ['損益', 'w-[220px]'],
];

const TermTab: React.FC<{ w: string; squeeze?: string; children: React.ReactNode }> = ({ w, squeeze = '', children }) => (
  <div className={`mr-[9px] mt-[1px] flex h-[15px] items-center whitespace-nowrap border-r border-r-[#444] ${w}`}>
    <span className={`inline-block origin-left ${squeeze}`}>{children}</span>
  </div>
);

const Terminal = () => (
  <div className="mt-[3px] flex h-[129px] shrink-0">
    <div className="flex w-[15px] shrink-0 flex-col pl-[2px]">
      <div className="h-[14px] pl-[1px] text-[11px] font-bold leading-[11px]">×</div>
      <div className="flex flex-1 w-[11px] items-start justify-center bg-linear-to-t from-[#8a8a8a] to-[#c8c8c8] pt-[70px]">
        <span className="rotate-180 text-[10px] leading-[11px] text-[#d4d0c8] [writing-mode:vertical-rl]">ターミナル</span>
      </div>
    </div>
    <div className="flex w-[1901px] flex-col text-[11px]">
      <div className="flex h-[15px] shrink-0">
        <div className="flex w-[188px] items-center border border-t-white border-l-white border-r-[#404040] border-b-[#404040] pl-[5px] text-[10.5px] tracking-[0.5px]">
          注文番号<span className="ml-[12px] text-[#e8e8e8]">△</span>
        </div>
        {colHeads.map(([t, w], i) => (
          <div key={i} className={`flex items-center justify-end whitespace-nowrap border border-t-white border-l-white border-r-[#404040] border-b-[#404040] pr-[5px] text-[10.5px] tracking-[0.5px] ${w}`}>{t}</div>
        ))}
      </div>
      <div className="mt-[1px] flex h-[20px] shrink-0 items-center bg-[#c6c6c6] pl-[5px] pr-[5px] font-bold">
        <svg width="10" height="10" viewBox="0 0 10 10" className="block"><circle cx="5" cy="5" r="3.5" fill="#bbb" stroke="#888" /><path d="M3 7l4-4" stroke="#888" /></svg>
        <span className="ml-[7px] text-[11px] tracking-[0.85px]">残高: 10 000 JPY&nbsp; 有効証拠金: 10 000&nbsp; 余剰証拠金: 10 000</span>
        <span className="ml-auto">0</span>
      </div>
      <div className="h-[72px] shrink-0 border-b border-b-black bg-white" />
      <div className="flex h-[18px] shrink-0 text-[12px] text-[#444]">
        <div className="ml-[3px] flex w-[43px] items-center justify-center border-x border-b border-black bg-white text-black">取引</div>
        <div className="w-[10px]" />
        <TermTab w="w-[60px]">運用比率</TermTab>
        <TermTab w="w-[59px]">口座履歴</TermTab>
        <TermTab w="w-[46px]" squeeze="scale-x-[0.84]">ニュース</TermTab>
        <TermTab w="w-[72px]" squeeze="scale-x-[0.84]">アラーム設定</TermTab>
        <TermTab w="w-[72px]" squeeze="scale-x-[0.84]">メールボックス</TermTab>
        <div className="mr-[9px] mt-[1px] flex h-[15px] w-[67px] items-center whitespace-nowrap border-r border-r-[#444]">
          <span className="inline-block w-[46px] origin-left scale-x-[0.84]">マーケット</span>
          <span className="mt-[3px] text-[9px] font-bold text-[#ff2020]">57</span>
        </div>
        <TermTab w="w-[49px]" squeeze="scale-x-[0.84]">シグナル</TermTab>
        <TermTab w="w-[41px]" squeeze="scale-x-[0.68]">ライブラリ</TermTab>
        <TermTab w="w-[78px]" squeeze="scale-x-[0.92]">エキスパート</TermTab>
        <TermTab w="w-[58px]">操作履歴</TermTab>
      </div>
    </div>
  </div>
);

const statusWidths = ['w-[125px]', 'w-[107px]', 'w-[72px]', 'w-[72px]', 'w-[70px]', 'w-[71px]', 'w-[72px]'];

const StatusBar = () => (
  <div className="mt-[3px] flex h-[20px] shrink-0 items-center border-t border-t-white text-[10px]">
    <div className="w-[1169px] pl-[2px] tracking-[0.2px]">チャートに表示された罫線分析ツール</div>
    {statusWidths.map((w, i) => (
      <div key={i} className={`flex h-full items-center border-l border-l-[#808080] pl-[5px] ${w}`}>{i === 0 ? 'Default' : ''}</div>
    ))}
    <div className="flex h-full flex-1 items-center border-l border-l-[#808080] pl-[5px]">
      <svg width="24" height="15" viewBox="0 0 24 15" shapeRendering="crispEdges" className="block">
        <path d="M1 0v6M4 0v5M7 0v4M10 0v4M13 0v3M16 0v3M19 0v2M22 0v2" stroke="#6f8a00" strokeWidth="2" />
        <path d="M1 12v3M4 11v4M7 10v5M10 9v6M13 8v7M16 7v8M19 6v9M22 5v10" stroke="#a02008" strokeWidth="2" />
      </svg>
      <span className="ml-[48px] tracking-[0.5px]">12/0 kb</span>
    </div>
  </div>
);

type MenuRow = { t: string; k?: string; ic?: string; sub?: boolean; on?: boolean; hi?: boolean } | 'sep';

const menuRows: MenuRow[] = [
  { t: 'Buy Limit 1.00', k: '0.92619', ic: 'upBlue' },
  'sep',
  { t: '注文発注', sub: true },
  { t: '板注文画面 (D)', k: 'Alt+B', ic: 'table' },
  { t: 'ワンクリックトレード (k)', k: 'Alt+T', ic: 'oneClick', on: true },
  { t: '表示中の罫線分析ツール (L)', k: 'Ctrl+I', ic: 'fDoc', hi: true },
  'sep',
  { t: '周期設定', sub: true },
  { t: '定型チャート', sub: true },
  { t: '更新 (R)', ic: 'refresh' },
  'sep',
  { t: '自動調整 (A)', k: 'Ctrl+A' },
  { t: 'グリッド (G)', k: 'Ctrl+G', ic: 'grid', on: true },
  { t: '出来高 (u)', k: 'Ctrl+L', ic: 'volume' },
  'sep',
  { t: 'ズームイン (Z)', k: '+', ic: 'zoomIn' },
  { t: 'ズームアウト (m)', k: '−', ic: 'zoomOut' },
  'sep',
  { t: '画像として保存... (i)', ic: 'save' },
  { t: '印刷プレビュー (v)', ic: 'preview' },
  { t: '印刷... (P)', k: 'Ctrl+P', ic: 'print' },
  'sep',
  { t: 'プロパティー... (o)', k: 'F8', ic: 'props' },
];

const ContextMenu = () => (
  <div className="absolute left-[892px] top-[207px] w-[241px] border border-[#404040] bg-white py-[1px] text-[11.5px] shadow-[1px_1px_0_#808080]">
    {menuRows.map((r, i) =>
      r === 'sep' ? (
        <div key={i} className="flex h-[8px]">
          <div className="w-[26px] bg-[#d4d0c8]" />
          <div className="ml-[7px] mt-[3px] h-[1px] w-[203px] bg-[#d4d0c8]" />
        </div>
      ) : (
        <div key={i} className="relative flex h-[23px] items-center">
          <div className="flex h-full w-[26px] shrink-0 items-center justify-center bg-[#d4d0c8]">
            {r.ic && !r.on && !r.hi && <Ico n={r.ic} />}
          </div>
          {r.hi && <div className="absolute inset-x-[2px] inset-y-0 border border-[#0a246a] bg-[#b4bedc]" />}
          {r.ic && (r.on || r.hi) && (
            <div className={`absolute left-[3px] flex h-[21px] w-[21px] items-center justify-center ${r.on ? 'border border-[#0a246a] bg-[#c1c8de]' : ''}`}>
              <Ico n={r.ic} />
            </div>
          )}
          <span className="relative ml-[7px] whitespace-nowrap tracking-[0.15px]">{r.t}</span>
          {r.k && <span className="relative ml-auto pr-[14px] tracking-[0.2px]">{r.k}</span>}
          {r.sub && <span className="ml-auto mr-[6px] h-0 w-0 border-y-[4px] border-l-[4px] border-y-transparent border-l-black" />}
        </div>
      ),
    )}
  </div>
);

export default function App() {
  return (
    <div className="relative flex h-[1035px] w-[1920px] flex-col overflow-hidden bg-[#d4d0c8] font-['Liberation_Sans','Noto_Sans_CJK_JP',sans-serif] text-[11px] text-black [font-feature-settings:'palt']">
      <div className="flex h-[18px] shrink-0 items-center bg-linear-to-r from-[#0a246a] to-[#a6caf0] pl-[3px] pr-[2px]">
        <Ico n="app" s={14} />
        <div className="ml-[1px] h-[15px] w-[60px] bg-black" />
        <span className="ml-[6px] whitespace-nowrap text-[12px] font-bold tracking-[0.25px] text-white">LCG-Demo Production - デモアカウント - USDCHF,M1</span>
        <div className="ml-auto flex gap-[2px]">
          <WinBtn kind="min" />
          <WinBtn kind="res" />
          <WinBtn kind="x" />
        </div>
      </div>
      <div className="flex h-[21px] shrink-0 items-center pl-[6px] text-[11px]">
        <span className="w-[72px]">ファイル (F)</span>
        <span className="w-[62px]">表示 (V)</span>
        <span className="w-[52px]">挿入 (I)</span>
        <span className="w-[73px]">チャート (C)</span>
        <span className="w-[66px]">ツール (T)</span>
        <span className="w-[83px]">ウィンドウ (W)</span>
        <span>ヘルプ (H)</span>
      </div>
      <div className="h-[1px] shrink-0 bg-white" />
      <Toolbar1 />
      <Toolbar2 />
      <div className="flex h-[787px] shrink-0">
        <aside className="w-[188px] shrink-0 pl-[4px] pr-[4px] pt-[2px]">
          <MarketWatch />
          <Navigator />
        </aside>
        <main className="flex-1 border-t border-t-[#404040] pl-[4px] pt-[2px]">
          <div className="grid grid-cols-[858px_864px] grid-rows-[377px_377px] gap-x-[4px] gap-y-[3px]">
            <ChartWindow title="EURUSD,H4" c={eur} gap="mt-[1px]" panel={<TradePanel small="1.12" a="12" as="4" b="13" bs="0" />} />
            <ChartWindow title="GBPUSD,H4" c={gbp} gap="mt-[1px]" wide panel={<TradePanel small="1.57" a="36" as="0" b="37" bs="2" />} />
            <ChartWindow title="USDCHF,M1" c={chf} gap="mt-[2px]" active panel={<TradePanel small="0.92" a="77" as="5" b="80" bs="0" red />} />
            <ChartWindow title="USDJPY,H4" c={jpy} gap="mt-[2px]" wide panel={<TradePanel small="119" a="77" as="2" b="78" bs="1" />} />
          </div>
          <div className="-ml-[4px] mt-[4px] flex h-[21px] items-start border-t border-t-black text-[11px]">
            <BevelTab label="EURUSD,H4" className="ml-[13px] w-[70px]" />
            <div className="flex h-[19px] w-[80px] items-center justify-center border-x border-b border-black bg-white">USDCHF,M1</div>
            <BevelTab label="GBPUSD,H4" className="ml-[11px] w-[69px] border-r border-r-[#444]" />
            <BevelTab label="USDJPY,H4" className="ml-[10px] w-[66px] border-r border-r-[#444]" />
            <div className="ml-auto mr-[6px] mt-[6px] flex gap-[9px]">
              <div className="h-0 w-0 border-y-[4px] border-r-[4px] border-y-transparent border-r-[#999]" />
              <div className="h-0 w-0 border-y-[4px] border-l-[4px] border-y-transparent border-l-[#999]" />
            </div>
          </div>
        </main>
      </div>
      <Terminal />
      <StatusBar />
      <ContextMenu />
    </div>
  );
}
